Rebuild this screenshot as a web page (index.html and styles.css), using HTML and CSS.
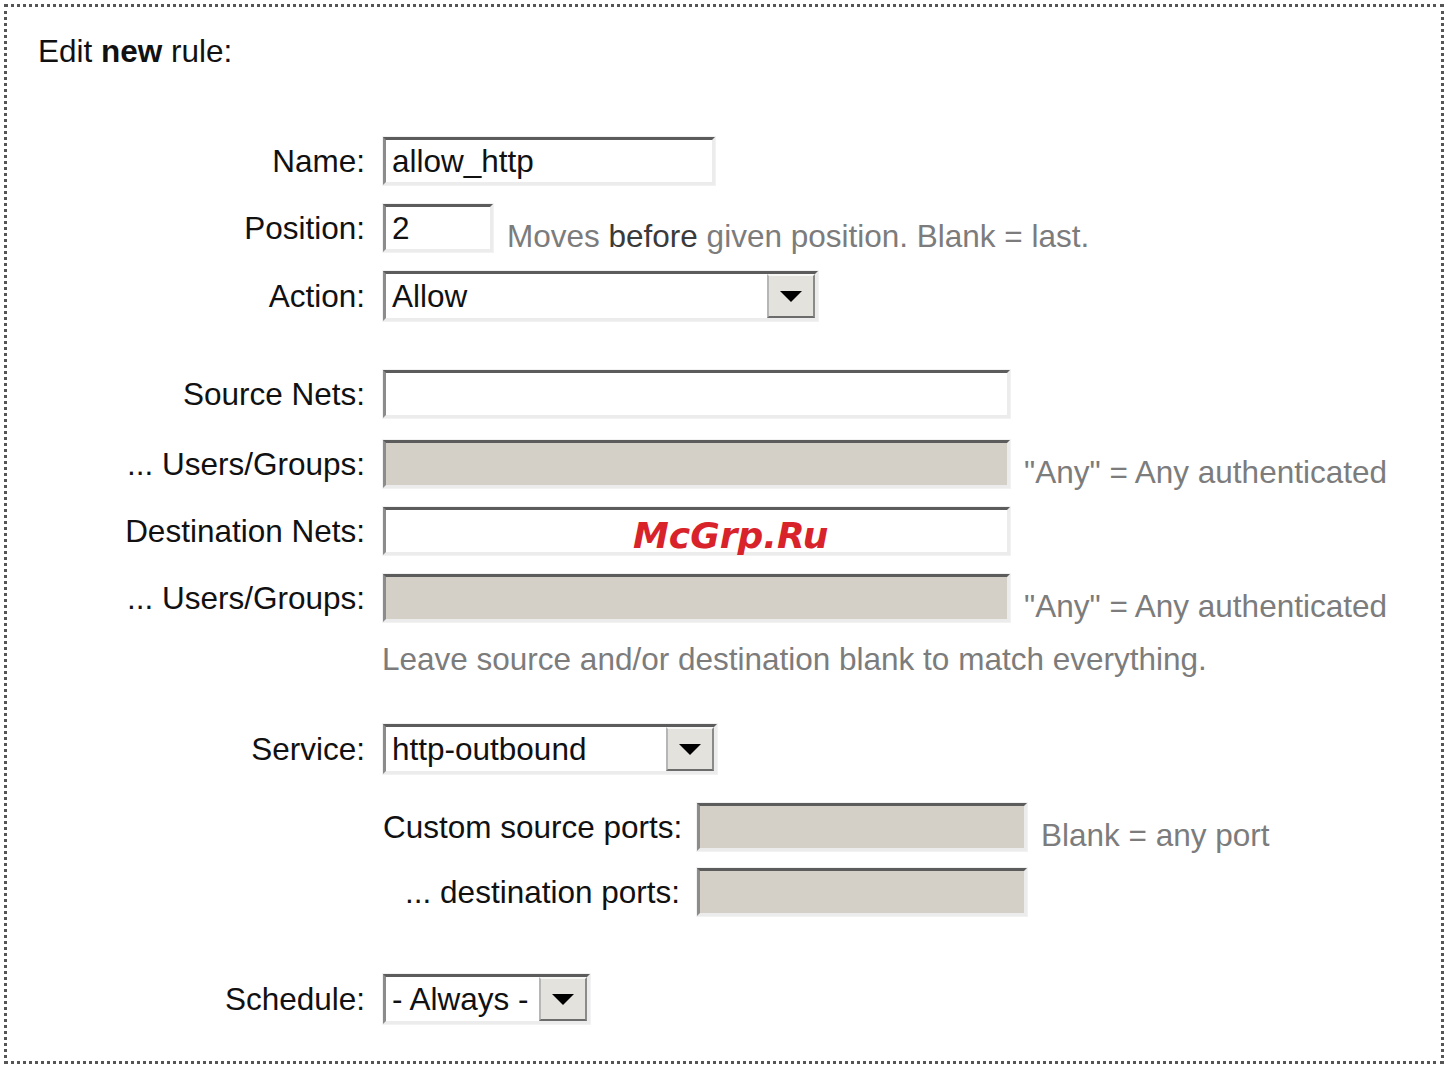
FILE: index.html
```html
<!DOCTYPE html>
<html lang="en">
<head>
    <meta charset="UTF-8">
    <meta name="viewport" content="width=device-width, initial-scale=1.0">
    <title>Edit new rule</title>
    <link rel="stylesheet" href="styles.css">
</head>
<body>
    <div class="panel">
        <h1 class="title">Edit <b>new</b> rule:</h1>

        <form class="rule-form">
            <div class="row">
                <label class="label" for="name">Name:</label>
                <input class="field w-name" id="name" type="text" value="allow_http">
            </div>
            <div class="row">
                <label class="label" for="pos">Position:</label>
                <input class="field w-pos" id="pos" type="text" value="2">
                <span class="hint">Moves <span class="hint-dark">before</span> given position. Blank = last.</span>
            </div>
            <div class="row row-select">
                <span class="label">Action:</span>
                <div class="select w-action">
                    <span class="select-value">Allow</span>
                    <span class="select-btn"><svg width="22" height="11" viewBox="0 0 22 11"><polygon points="0,0 22,0 11,11" fill="#000"/></svg></span>
                </div>
            </div>

            <div class="row group">
                <label class="label" for="src">Source Nets:</label>
                <input class="field w-wide" id="src" type="text">
            </div>
            <div class="row after-src">
                <span class="label">... Users/Groups:</span>
                <input class="field w-wide" type="text" disabled>
                <span class="hint">"Any" = Any authenticated</span>
            </div>
            <div class="row">
                <label class="label" for="dst">Destination Nets:</label>
                <input class="field w-wide" id="dst" type="text">
            </div>
            <div class="row">
                <span class="label">... Users/Groups:</span>
                <input class="field w-wide" type="text" disabled>
                <span class="hint">"Any" = Any authenticated</span>
            </div>
            <div class="row row-note">
                <span class="label"></span>
                <span class="note">Leave source and/or destination blank to match everything.</span>
            </div>

            <div class="row row-select group-svc">
                <span class="label">Service:</span>
                <div class="select w-service">
                    <span class="select-value">http-outbound</span>
                    <span class="select-btn"><svg width="22" height="11" viewBox="0 0 22 11"><polygon points="0,0 22,0 11,11" fill="#000"/></svg></span>
                </div>
            </div>
            <div class="row sub">
                <span class="label"></span>
                <span class="sublabel">Custom source ports:</span>
                <input class="field w-ports" type="text" disabled>
                <span class="hint">Blank = any port</span>
            </div>
            <div class="row sub-next">
                <span class="label"></span>
                <span class="sublabel">... destination ports:</span>
                <input class="field w-ports" type="text" disabled>
            </div>

            <div class="row row-select group-lg">
                <span class="label">Schedule:</span>
                <div class="select w-schedule">
                    <span class="select-value">- Always -</span>
                    <span class="select-btn"><svg width="22" height="11" viewBox="0 0 22 11"><polygon points="0,0 22,0 11,11" fill="#000"/></svg></span>
                </div>
            </div>
        </form>

        <div class="watermark">McGrp.Ru</div>
    </div>
</body>
</html>
```

FILE: styles.css
```css
*{
    box-sizing: border-box;
}
body{
    margin: 0;
    background: #fff;
    color: #111;
    font-family: "Liberation Sans", Arial, sans-serif;
    font-size: 31.5px;
}
.panel{
    position: relative;
    margin: 4px;
    width: 1440px;
    height: 1060px;
    border: 3px dotted #555;
    padding: 24px 0 0 31px;
}
.title{
    margin: 0;
    font-size: 31.5px;
    font-weight: normal;
    line-height: 40px;
}
.rule-form{
    margin-top: 66px;
    display: flex;
    flex-direction: column;
}
.row{
    display: flex;
    align-items: center;
    height: 48px;
    margin-top: 19px;
}
.row:first-child{
    margin-top: 0;
}
.row-select{
    height: 50px;
}
.row-note{
    height: 40px;
    margin-top: 17px;
}
.group{
    margin-top: 49px;
}
.after-src{
    margin-top: 22px;
}
.group-svc{
    margin-top: 45px;
}
.group-lg{
    margin-top: 58px;
}
.sub{
    margin-top: 29px;
}
.sub-next{
    margin-top: 17px;
}
.label{
    flex: none;
    width: 327px;
    margin-right: 18px;
    text-align: right;
    line-height: 40px;
    white-space: nowrap;
}
.sublabel{
    flex: none;
    width: 297px;
    margin-right: 17px;
    text-align: right;
    line-height: 40px;
    white-space: nowrap;
}

/* sunken win-classic boxes */
.field, .select{
    flex: none;
    height: 48px;
    border-style: solid;
    border-width: 3px;
    border-color: #5c5c5c #ececec #ececec #8c8c8c;
    background: #fff;
    box-shadow: 0 0 0 1px #f2f2f2;
}
.field{
    font: inherit;
    color: #111;
    padding: 0 6px;
    outline: none;
}
.field:disabled{
    background: #d4d0c8;
}
.w-name{ width: 332px; }
.w-pos{ width: 110px; }
.w-wide{ width: 627px; }
.w-ports{ width: 330px; }
.w-action{ width: 435px; }
.w-service{ width: 334px; }
.w-schedule{ width: 207px; }

.select{
    height: 50px;
    display: flex;
    align-items: center;
}
.select-value{
    flex: 1;
    padding-left: 6px;
    white-space: nowrap;
    overflow: hidden;
    line-height: 40px;
}
.select-btn{
    flex: none;
    width: 48px;
    height: 44px;
    display: flex;
    align-items: center;
    justify-content: center;
    background: #e4e2dd;
    border-style: solid;
    border-width: 2px;
    border-color: #f6f6f4 #8a8a8a #6c6c6c #b6b6b6;
}

.hint{
    margin-left: 14px;
    margin-top: 16px;
    color: #7c7c7c;
    white-space: nowrap;
    line-height: 40px;
}
.hint-dark{
    color: #3a3a3a;
}
.note{
    color: #7c7c7c;
    white-space: nowrap;
    line-height: 40px;
    margin-left: -1px;
}

.watermark{
    position: absolute;
    left: 626px;
    top: 511px;
    font-family: "DejaVu Sans", sans-serif;
    font-size: 36px;
    font-weight: bold;
    font-style: italic;
    line-height: 36px;
    color: #d9232a;
}
```
